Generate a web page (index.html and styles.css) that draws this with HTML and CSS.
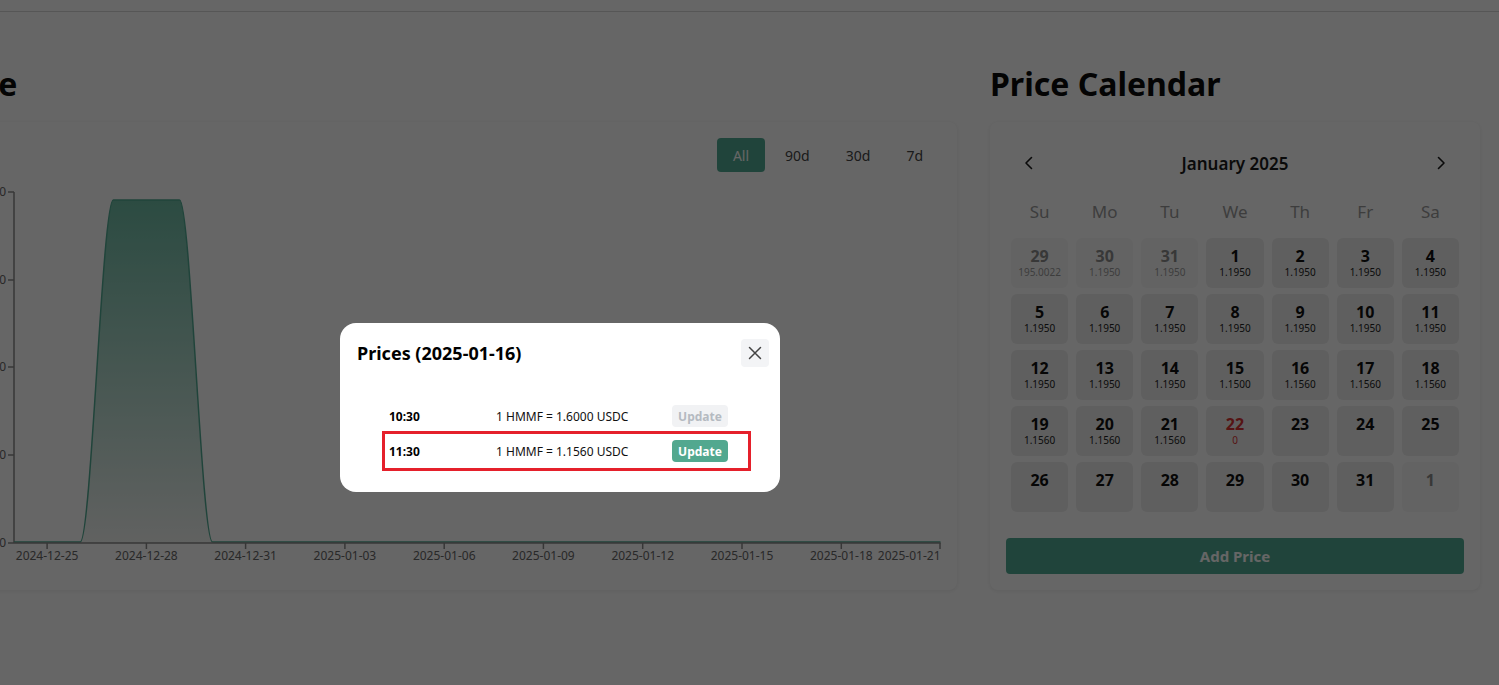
FILE: index.html
```html
<!DOCTYPE html>
<html lang="en">
<head>
<meta charset="utf-8">
<title>Price Calendar</title>
<link rel="stylesheet" href="styles.css">
</head>
<body>
<div class="topbar"></div>
<main class="page">
  <section class="trend">
    <h2 class="title">Price</h2>
    <div class="card chart-card">
      <div class="ranges">
        <button class="range active">All</button>
        <button class="range">90d</button>
        <button class="range">30d</button>
        <button class="range">7d</button>
      </div>
      <svg class="chart" width="989" height="402" viewBox="0 0 989 402">
        <defs>
          <linearGradient id="area" x1="0" y1="0" x2="0" y2="1">
            <stop offset="0" stop-color="#6ebca5"/>
            <stop offset="1" stop-color="#f2f4f2"/>
          </linearGradient>
        </defs>
        <g class="yaxis">
          <line x1="62" y1="20" x2="62" y2="371"/>
          <line x1="56" y1="20" x2="62" y2="20"/>
          <line x1="56" y1="108" x2="62" y2="108"/>
          <line x1="56" y1="195" x2="62" y2="195"/>
          <line x1="56" y1="283" x2="62" y2="283"/>
          <line x1="56" y1="371" x2="62" y2="371"/>
          <text x="54" y="24">200</text>
          <text x="54" y="112">150</text>
          <text x="54" y="199">100</text>
          <text x="54" y="287">50</text>
          <text x="54" y="375">0</text>
        </g>
        <path class="area" d="M62,370 L128.2,370 C139.2,370 150.3,28 161.3,28 L227.5,28 C238.5,28 249.5,370 260.5,370 L988.5,370 L988.5,371 L62,371 Z"/>
        <path class="line" d="M62,370 L128.2,370 C139.2,370 150.3,28 161.3,28 L227.5,28 C238.5,28 249.5,370 260.5,370 L988.5,370"/>
        <g class="xaxis">
          <line x1="62" y1="371" x2="988.5" y2="371"/>
          <line x1="95.1" y1="371" x2="95.1" y2="377"/>
          <line x1="194.4" y1="371" x2="194.4" y2="377"/>
          <line x1="293.6" y1="371" x2="293.6" y2="377"/>
          <line x1="392.9" y1="371" x2="392.9" y2="377"/>
          <line x1="492.2" y1="371" x2="492.2" y2="377"/>
          <line x1="591.4" y1="371" x2="591.4" y2="377"/>
          <line x1="690.7" y1="371" x2="690.7" y2="377"/>
          <line x1="790" y1="371" x2="790" y2="377"/>
          <line x1="889.3" y1="371" x2="889.3" y2="377"/>
          <line x1="988" y1="371" x2="988" y2="377"/>
          <text x="95.1" y="388">2024-12-25</text>
          <text x="194.4" y="388">2024-12-28</text>
          <text x="293.6" y="388">2024-12-31</text>
          <text x="392.9" y="388">2025-01-03</text>
          <text x="492.2" y="388">2025-01-06</text>
          <text x="591.4" y="388">2025-01-09</text>
          <text x="690.7" y="388">2025-01-12</text>
          <text x="790" y="388">2025-01-15</text>
          <text x="889.3" y="388">2025-01-18</text>
          <text class="last" x="988.5" y="388">2025-01-21</text>
        </g>
      </svg>
    </div>
  </section>

  <section class="calendar">
    <h2 class="title">Price Calendar</h2>
    <div class="card cal-card">
      <div class="cal-head">
        <button class="nav" aria-label="Previous month">
          <svg width="16" height="16" viewBox="0 0 16 16"><path d="M10.5 2.5 L5 8 L10.5 13.5"/></svg>
        </button>
        <div class="month">January 2025</div>
        <button class="nav" aria-label="Next month">
          <svg width="16" height="16" viewBox="0 0 16 16"><path d="M5.5 2.5 L11 8 L5.5 13.5"/></svg>
        </button>
      </div>
      <div class="weekdays">
        <span>Su</span><span>Mo</span><span>Tu</span><span>We</span><span>Th</span><span>Fr</span><span>Sa</span>
      </div>
      <div class="days">
        <div class="day other"><b>29</b><small>195.0022</small></div>
        <div class="day other"><b>30</b><small>1.1950</small></div>
        <div class="day other"><b>31</b><small>1.1950</small></div>
        <div class="day"><b>1</b><small>1.1950</small></div>
        <div class="day"><b>2</b><small>1.1950</small></div>
        <div class="day"><b>3</b><small>1.1950</small></div>
        <div class="day"><b>4</b><small>1.1950</small></div>
        <div class="day"><b>5</b><small>1.1950</small></div>
        <div class="day"><b>6</b><small>1.1950</small></div>
        <div class="day"><b>7</b><small>1.1950</small></div>
        <div class="day"><b>8</b><small>1.1950</small></div>
        <div class="day"><b>9</b><small>1.1950</small></div>
        <div class="day"><b>10</b><small>1.1950</small></div>
        <div class="day"><b>11</b><small>1.1950</small></div>
        <div class="day"><b>12</b><small>1.1950</small></div>
        <div class="day"><b>13</b><small>1.1950</small></div>
        <div class="day"><b>14</b><small>1.1950</small></div>
        <div class="day"><b>15</b><small>1.1500</small></div>
        <div class="day"><b>16</b><small>1.1560</small></div>
        <div class="day"><b>17</b><small>1.1560</small></div>
        <div class="day"><b>18</b><small>1.1560</small></div>
        <div class="day"><b>19</b><small>1.1560</small></div>
        <div class="day"><b>20</b><small>1.1560</small></div>
        <div class="day"><b>21</b><small>1.1560</small></div>
        <div class="day today"><b>22</b><small>0</small></div>
        <div class="day"><b>23</b></div>
        <div class="day"><b>24</b></div>
        <div class="day"><b>25</b></div>
        <div class="day"><b>26</b></div>
        <div class="day"><b>27</b></div>
        <div class="day"><b>28</b></div>
        <div class="day"><b>29</b></div>
        <div class="day"><b>30</b></div>
        <div class="day"><b>31</b></div>
        <div class="day other"><b>1</b></div>
      </div>
      <button class="add">Add Price</button>
    </div>
  </section>
</main>

<div class="overlay"></div>

<div class="modal" role="dialog" aria-label="Prices (2025-01-16)">
  <div class="modal-head">
    <h3 class="modal-title">Prices (2025-01-16)</h3>
    <button class="close" aria-label="Close">
      <svg width="14" height="14" viewBox="0 0 14 14"><path d="M1.5 1.5 L12.5 12.5 M12.5 1.5 L1.5 12.5"/></svg>
    </button>
  </div>
  <div class="price-list">
    <div class="price-row">
      <span class="time">10:30</span>
      <span class="rate">1 HMMF = 1.6000 USDC</span>
      <button class="update" disabled>Update</button>
    </div>
    <div class="price-row marked">
      <span class="time">11:30</span>
      <span class="rate">1 HMMF = 1.1560 USDC</span>
      <button class="update primary">Update</button>
    </div>
  </div>
</div>
</body>
</html>
```

FILE: styles.css
```css
* { box-sizing: border-box; }

html, body {
  margin: 0;
  padding: 0;
  background: #ffffff;
  font-family: "Noto Sans", "Open Sans", sans-serif;
  color: #111;
  overflow: hidden;
  height: 100%;
}

button {
  font-family: inherit;
  border: 0;
  cursor: pointer;
}

.topbar {
  height: 12px;
  border-bottom: 1px solid #d6d6d6;
  background: #fff;
}

.page {
  display: flex;
  gap: 33px;
  margin-left: -64px;
  padding-right: 19px;
  padding-top: 52px;
}

.trend { flex: 1; min-width: 0; }
.calendar { width: 490px; flex: none; }

.title {
  margin: 0 0 18px;
  font-size: 32px;
  line-height: 40px;
  font-weight: 700;
  color: #0a0a0a;
  white-space: nowrap;
}

.trend .title { padding-left: 2px; }

.card {
  background: #fff;
  border-radius: 8px;
  box-shadow: 0 1px 4px rgba(0, 0, 0, 0.08);
  padding: 16px;
}

.chart-card { height: 468px; }

.ranges {
  display: flex;
  justify-content: flex-end;
  gap: 4px;
  padding-right: 2px;
}

.range {
  height: 34px;
  padding: 0 16px;
  border-radius: 4px;
  background: transparent;
  color: #444;
  font-size: 14px;
}

.range.active {
  background: #52ab93;
  color: #fff;
}

.chart { display: block; }

.yaxis line, .xaxis line {
  stroke: #8a8a8a;
  stroke-width: 1.5;
}

.yaxis text, .xaxis text {
  font-size: 12px;
  fill: #666;
  font-family: "Noto Sans", sans-serif;
}

.yaxis text { text-anchor: end; }
.xaxis text { text-anchor: middle; }
.xaxis text.last { text-anchor: end; }

.area { fill: url(#area); }
.line { fill: none; stroke: #52ab93; stroke-width: 1.5; }

/* calendar */
.cal-card { padding-top: 17px; }

.cal-head {
  height: 48px;
  display: flex;
  align-items: center;
  justify-content: space-between;
  padding: 0 7px;
}

.nav {
  width: 32px;
  height: 32px;
  background: transparent;
  display: flex;
  align-items: center;
  justify-content: center;
  padding: 0;
}

.nav path {
  fill: none;
  stroke: #1a1a1a;
  stroke-width: 1.6;
  stroke-linecap: round;
  stroke-linejoin: round;
}

.month {
  font-size: 17px;
  font-weight: 600;
  color: #1a1a1a;
}

.weekdays {
  display: grid;
  grid-template-columns: repeat(7, 1fr);
  column-gap: 8px;
  margin: 8px 5px 11px;
  height: 32px;
  align-items: center;
}

.weekdays span {
  text-align: center;
  font-size: 17px;
  color: #9a9a9a;
}

.days {
  display: grid;
  grid-template-columns: repeat(7, 1fr);
  grid-auto-rows: 50px;
  column-gap: 8px;
  row-gap: 6px;
  margin: 0 5px;
}

.day {
  background: #eeeeee;
  border-radius: 6px;
  padding-top: 8px;
  display: flex;
  flex-direction: column;
  align-items: center;
}

.day b {
  font-size: 16px;
  line-height: 20px;
  font-weight: 700;
  color: #111;
}

.day small {
  font-size: 10px;
  line-height: 12px;
  color: #222;
}

.day.other { background: #f8f8f8; }
.day.other b { color: #8c8c8c; }
.day.other small { color: #9a9a9a; }

.day.today b, .day.today small { color: #d63434; }

.add {
  display: block;
  width: 100%;
  height: 36px;
  margin-top: 26px;
  border-radius: 4px;
  background: #52ab93;
  color: #fff;
  font-size: 15px;
  font-weight: 700;
}

/* overlay + modal */
.overlay {
  position: fixed;
  inset: 0;
  background: rgba(0, 0, 0, 0.6);
}

.modal {
  position: fixed;
  left: 340px;
  top: 323px;
  width: 440px;
  height: 169px;
  background: #fff;
  border-radius: 16px;
  padding: 16px 11px 0 17px;
}

.modal-head {
  display: flex;
  align-items: center;
  justify-content: space-between;
  height: 28px;
}

.modal-title {
  margin: 0;
  font-size: 18px;
  font-weight: 700;
  color: #000;
}

.close {
  width: 28px;
  height: 28px;
  border-radius: 4px;
  background: #f3f4f6;
  display: flex;
  align-items: center;
  justify-content: center;
  padding: 0;
}

.close path {
  stroke: #444;
  stroke-width: 1.5;
  stroke-linecap: round;
}

.price-list {
  margin: 32px 21px 0 28px;
  display: flex;
  flex-direction: column;
  gap: 1px;
}

.price-row {
  height: 34px;
  display: grid;
  grid-template-columns: 107px 176px 56px;
  align-items: center;
  padding-left: 4px;
}

.price-row.marked {
  outline: 3px solid #e5202b;
}

.time {
  font-size: 12px;
  font-weight: 700;
  color: #000;
}

.rate {
  font-size: 12px;
  color: #111;
}

.update {
  width: 56px;
  height: 22px;
  border-radius: 4px;
  font-size: 12px;
  font-weight: 700;
  background: #f1f2f4;
  color: #b5bac1;
  padding: 0;
}

.update.primary {
  background: #52a88f;
  color: #fff;
}
```
